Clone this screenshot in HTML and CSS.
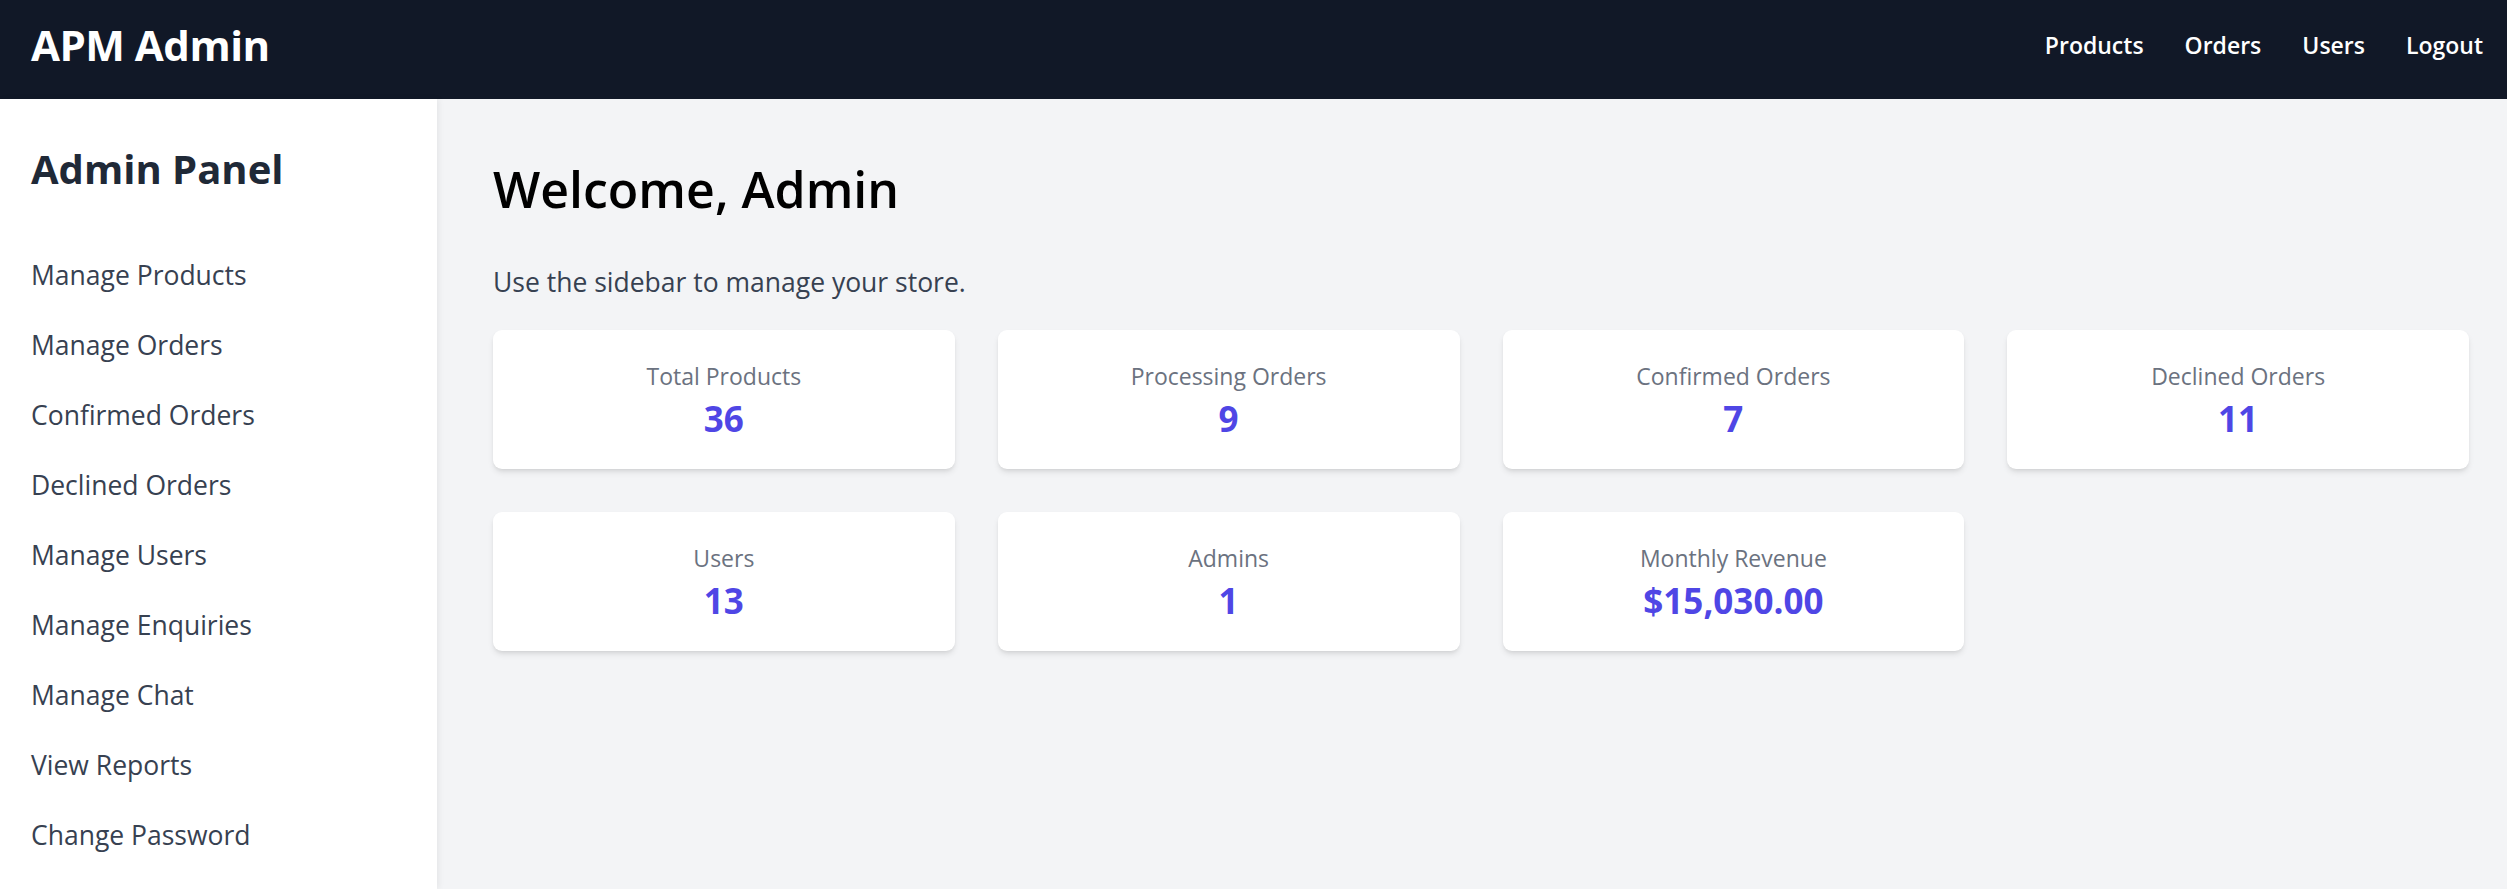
FILE: index.html
```html
<!DOCTYPE html>
<html lang="en">
<head>
<meta charset="utf-8">
<title>APM Admin</title>
<link rel="stylesheet" href="styles.css">
</head>
<body>
<header class="topbar">
  <div class="brand">APM Admin</div>
  <nav class="topnav">
    <a href="#">Products</a>
    <a href="#">Orders</a>
    <a href="#">Users</a>
    <a href="#">Logout</a>
  </nav>
</header>
<div class="layout">
  <aside class="sidebar">
    <h2 class="sidebar-title">Admin Panel</h2>
    <ul class="side-links">
      <li><a href="#">Manage Products</a></li>
      <li><a href="#">Manage Orders</a></li>
      <li><a href="#">Confirmed Orders</a></li>
      <li><a href="#">Declined Orders</a></li>
      <li><a href="#">Manage Users</a></li>
      <li><a href="#">Manage Enquiries</a></li>
      <li><a href="#">Manage Chat</a></li>
      <li><a href="#">View Reports</a></li>
      <li><a href="#">Change Password</a></li>
    </ul>
  </aside>
  <main class="main">
    <h1 class="welcome">Welcome, Admin</h1>
    <p class="subtitle">Use the sidebar to manage your store.</p>
    <div class="stats">
      <div class="card"><div class="card-label">Total Products</div><div class="card-value">36</div></div>
      <div class="card"><div class="card-label">Processing Orders</div><div class="card-value">9</div></div>
      <div class="card"><div class="card-label">Confirmed Orders</div><div class="card-value">7</div></div>
      <div class="card"><div class="card-label">Declined Orders</div><div class="card-value">11</div></div>
      <div class="card"><div class="card-label">Users</div><div class="card-value">13</div></div>
      <div class="card"><div class="card-label">Admins</div><div class="card-value">1</div></div>
      <div class="card"><div class="card-label">Monthly Revenue</div><div class="card-value">$15,030.00</div></div>
    </div>
  </main>
</div>
</body>
</html>
```
FILE: styles.css
```css
* { box-sizing: border-box; }
html, body { margin: 0; padding: 0; }
body {
  font-family: "Open Sans", "Noto Sans", "Liberation Sans", sans-serif;
  background: #f3f4f6;
  color: #111827;
}
a { text-decoration: none; color: inherit; }

.topbar {
  height: 99px;
  background: #111827;
  color: #ffffff;
  display: flex;
  align-items: center;
  justify-content: space-between;
  padding: 0 24px 9px 31px;
}
.brand {
  font-size: 42px;
  font-weight: 700;
  letter-spacing: -0.5px;
  line-height: 1;
}
.topnav {
  display: flex;
  gap: 41px;
}
.topnav a {
  font-size: 23px;
  font-weight: 600;
  color: #ffffff;
}

.layout {
  display: flex;
  min-height: calc(100vh - 99px);
}
.sidebar {
  width: 437px;
  flex: none;
  background: #ffffff;
  padding: 46px 32px 0 31px;
  box-shadow: 2px 0 6px rgba(0,0,0,0.06);
  position: relative;
  z-index: 1;
}
.sidebar-title {
  margin: 0;
  font-size: 40px;
  line-height: 48px;
  font-weight: 700;
  color: #1f2937;
}
.side-links {
  list-style: none;
  margin: 47px 0 0;
  padding: 0;
}
.side-links li {
  height: 70px;
  line-height: 70px;
}
.side-links a {
  font-size: 26.5px;
  color: #374151;
}

.main {
  flex: 1;
  padding: 60px 38px 40px 56px;
}
.welcome {
  margin: 0;
  font-size: 50px;
  line-height: 60px;
  font-weight: 600;
  color: #000000;
}
.subtitle {
  margin: 45px 0 0;
  font-size: 26.5px;
  line-height: 36px;
  color: #374151;
}
.stats {
  margin-top: 30px;
  display: grid;
  grid-template-columns: repeat(4, 1fr);
  gap: 43px;
}
.card {
  background: #ffffff;
  border-radius: 9px;
  height: 139px;
  padding-top: 31px;
  text-align: center;
  box-shadow: 0 4px 6px -1px rgba(0,0,0,0.1), 0 2px 4px -2px rgba(0,0,0,0.1);
}
.card-label {
  font-size: 23px;
  line-height: 30px;
  color: #6b7280;
}
.card-value {
  margin-top: 6px;
  font-size: 35px;
  line-height: 44px;
  font-weight: 700;
  color: #4f46e5;
}
```
